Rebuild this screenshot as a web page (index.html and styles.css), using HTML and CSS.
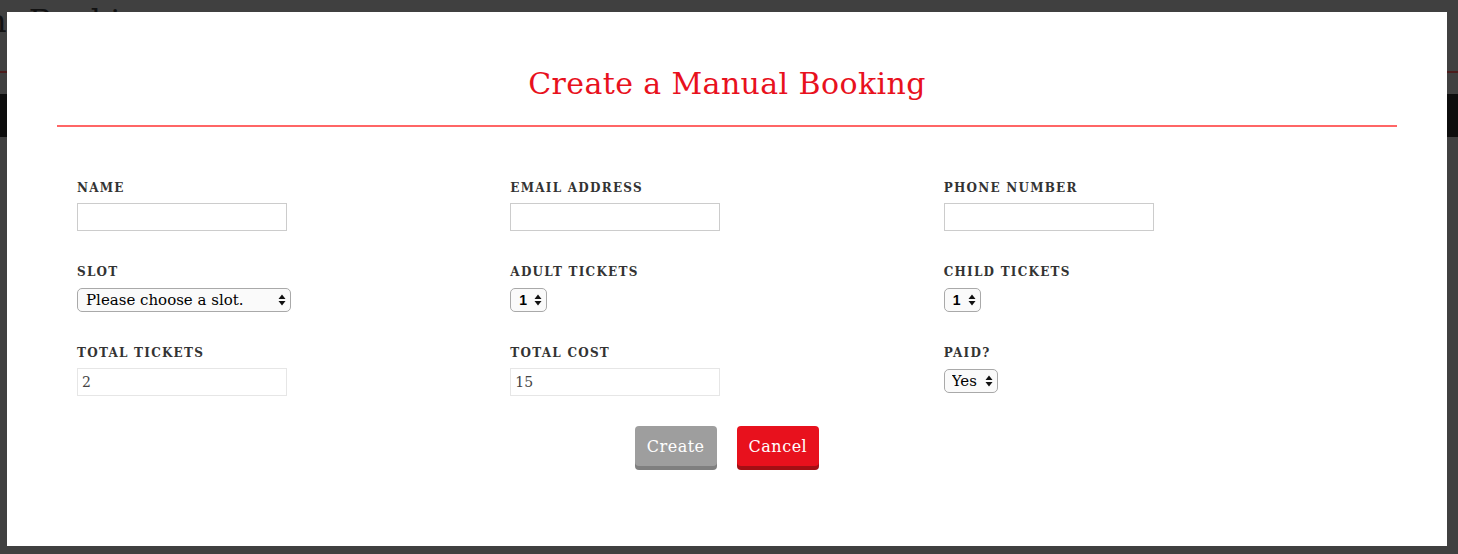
FILE: index.html
```html
<!DOCTYPE html>
<html lang="en">
<head>
<meta charset="utf-8">
<title>Create a Manual Booking</title>
<link rel="stylesheet" href="styles.css">
</head>
<body>
<div class="page">
  <div class="bg-header"><h1 class="bg-title">n Booking</h1></div>
  <div class="bg-rule"></div>
  <div class="bg-nav"></div>
</div>

<div class="modal">
  <div class="modal-head">
    <h2 class="modal-title">Create a Manual Booking</h2>
  </div>
  <form class="form">
    <div class="grid">
      <div class="field">
        <label class="label">Name</label>
        <input class="input" type="text">
      </div>
      <div class="field">
        <label class="label">Email Address</label>
        <input class="input" type="text">
      </div>
      <div class="field">
        <label class="label">Phone Number</label>
        <input class="input" type="text">
      </div>

      <div class="field">
        <label class="label">Slot</label>
        <span class="select-wrap">
          <select class="select select-slot"><option>Please choose a slot.</option></select>
          <svg class="arrows" width="8" height="12" viewBox="0 0 8 12"><path d="M4 0.5 L7.5 5 L0.5 5 Z M0.5 7 L7.5 7 L4 11.5 Z" fill="#111"/></svg>
        </span>
      </div>
      <div class="field">
        <label class="label">Adult Tickets</label>
        <span class="select-wrap">
          <select class="select select-num"><option>1</option></select>
          <svg class="arrows" width="8" height="12" viewBox="0 0 8 12"><path d="M4 0.5 L7.5 5 L0.5 5 Z M0.5 7 L7.5 7 L4 11.5 Z" fill="#111"/></svg>
        </span>
      </div>
      <div class="field">
        <label class="label">Child Tickets</label>
        <span class="select-wrap">
          <select class="select select-num"><option>1</option></select>
          <svg class="arrows" width="8" height="12" viewBox="0 0 8 12"><path d="M4 0.5 L7.5 5 L0.5 5 Z M0.5 7 L7.5 7 L4 11.5 Z" fill="#111"/></svg>
        </span>
      </div>

      <div class="field">
        <label class="label">Total Tickets</label>
        <input class="input input-ro" type="text" value="2" readonly>
      </div>
      <div class="field">
        <label class="label">Total Cost</label>
        <input class="input input-ro" type="text" value="15" readonly>
      </div>
      <div class="field">
        <label class="label">Paid?</label>
        <span class="select-wrap">
          <select class="select select-paid"><option>Yes</option></select>
          <svg class="arrows" width="8" height="12" viewBox="0 0 8 12"><path d="M4 0.5 L7.5 5 L0.5 5 Z M0.5 7 L7.5 7 L4 11.5 Z" fill="#111"/></svg>
        </span>
      </div>
    </div>

    <div class="actions">
      <button type="button" class="btn btn-grey">Create</button>
      <button type="button" class="btn btn-red">Cancel</button>
    </div>
  </form>
</div>
</body>
</html>
```

FILE: styles.css
```css
html, body {
  margin: 0;
  padding: 0;
}

body {
  width: 1458px;
  height: 554px;
  overflow: hidden;
  background: #404040;
  font-family: "DejaVu Serif", "Liberation Serif", serif;
  position: relative;
}

/* background page (seen through the overlay) */
.page {
  display: flex;
  flex-direction: column;
}

.bg-header {
  height: 71px;
  overflow: hidden;
}

.bg-title {
  margin: 1px 0 0 -14px;
  font-size: 32px;
  line-height: 40px;
  font-weight: normal;
  color: #121212;
  white-space: nowrap;
  word-spacing: 12px;
}

.bg-rule {
  height: 2px;
  background: #4b1c1c;
}

.bg-nav {
  margin-top: 21px;
  height: 43px;
  background: #0d0d0d;
}

/* modal */
.modal {
  position: absolute;
  left: 7px;
  top: 12px;
  width: 1440px;
  height: 534px;
  background: #fff;
  box-sizing: border-box;
  padding: 0 50px;
}

.modal-head {
  padding-top: 52px;
  padding-bottom: 21px;
  border-bottom: 2px solid #f66;
}

.modal-title {
  margin: 0;
  text-align: center;
  font-size: 30px;
  line-height: 40px;
  font-weight: normal;
  color: #e8111d;
  letter-spacing: 0.4px;
}

.form {
  padding: 53px 20px 0;
}

.grid {
  display: grid;
  grid-template-columns: repeat(3, 1fr);
  row-gap: 33px;
  align-items: start;
}

.field {
  display: flex;
  flex-direction: column;
  align-items: flex-start;
}

.label {
  display: block;
  font-size: 12px;
  line-height: 16px;
  font-weight: bold;
  text-transform: uppercase;
  letter-spacing: 1.25px;
  color: #333;
  margin-bottom: 7px;
}

.input {
  box-sizing: border-box;
  width: 210px;
  height: 28px;
  margin: 0;
  border: 1px solid #ccc;
  border-radius: 0;
  padding: 0 4px;
  font-family: "DejaVu Serif", "Liberation Serif", serif;
  font-size: 14px;
  color: #444;
  background: #fff;
  outline: none;
}

.input-ro {
  border-color: #e6e6e6;
}

.select-wrap {
  position: relative;
  display: inline-block;
  line-height: 0;
  margin-top: 1px;
}

.select {
  -webkit-appearance: none;
  appearance: none;
  box-sizing: border-box;
  height: 24px;
  margin: 0;
  border: 1px solid #a9a9a9;
  border-radius: 5px;
  background: #fafafa;
  color: #000;
  padding: 0 0 0 8px;
  font-family: "DejaVu Serif", "Liberation Serif", serif;
  font-size: 15px;
  outline: none;
}

.select-slot {
  width: 214px;
}

.select-num {
  width: 37px;
  font-family: "Liberation Sans", sans-serif;
  font-size: 14px;
  font-weight: bold;
  padding-left: 8px;
}

.select-paid {
  width: 54px;
  padding-left: 7px;
}

.arrows {
  position: absolute;
  right: 5px;
  top: 6px;
  pointer-events: none;
}

.actions {
  display: flex;
  justify-content: center;
  gap: 20px;
  margin-top: 30px;
  margin-left: -20px;
  margin-right: -20px;
}

.btn {
  height: 40px;
  padding: 0 12px;
  border: 0;
  border-radius: 4px;
  font-family: "DejaVu Serif", "Liberation Serif", serif;
  font-size: 16px;
  letter-spacing: 0.5px;
  color: #fff;
  cursor: pointer;
}

.btn-grey {
  background: #9e9e9e;
  box-shadow: 0 4px 0 #7f7f7f;
}

.btn-red {
  background: #e8111d;
  box-shadow: 0 4px 0 #a30f14;
}
```
